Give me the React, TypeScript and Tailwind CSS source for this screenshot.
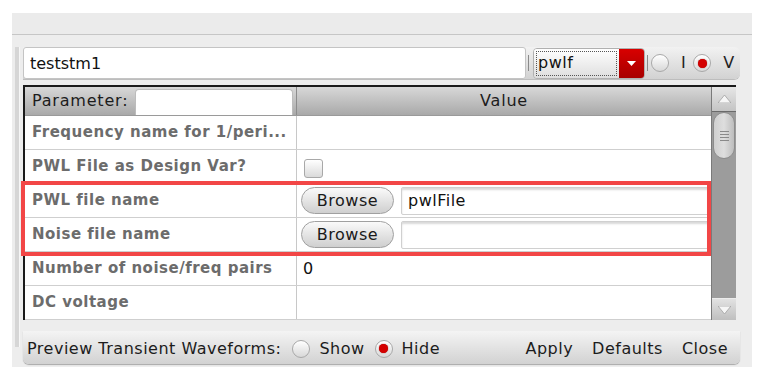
import React from 'react';

const rows = [
  { label: 'Frequency name for 1/peri...', kind: 'empty' },
  { label: 'PWL File as Design Var?', kind: 'check' },
  { label: 'PWL file name', kind: 'browse', value: 'pwlFile' },
  { label: 'Noise file name', kind: 'browse', value: '' },
  { label: 'Number of noise/freq pairs', kind: 'text', value: '0' },
  { label: 'DC voltage', kind: 'empty' },
];

const Radio: React.FC<{ on?: boolean }> = ({ on }) => (
  <div className="shrink-0 w-[18px] h-[18px] rounded-full border border-[#a8a8a8] bg-gradient-to-b from-white to-[#d8d8d8] flex items-center justify-center shadow-[inset_0_1px_1px_rgba(255,255,255,0.9)]">
    {on && <div className="w-[9px] h-[9px] rounded-full bg-[#d40000] shadow-[0_0_1px_#800]" />}
  </div>
);

const App: React.FC = () => {
  return (
    <div className="w-[765px] h-[382px] bg-white pt-[13px] pl-[12px]" style={{ fontFamily: '"DejaVu Sans", sans-serif' }}>
      <div className="w-[740px] h-[354px] bg-[#ededed] flex flex-col">
        <div className="h-[22px] border-b border-[#c6c6c6] bg-[#ebebeb] shrink-0" />

        <div className="flex pl-[3px] pr-[12px]">
          <div className="shrink-0 w-[5px] mt-[12px] h-[300px] bg-[#d6d6d6] border-r border-[#f6f6f6]" />
          <div className="flex-1 min-w-0 pl-[3px] pt-[12px] text-[16px] tracking-[0.5px]">
            {/* top row */}
            <div className="h-[32px] flex items-center rounded-r-[6px] bg-gradient-to-b from-[#f2f2f2] to-[#d2d2d2] shadow-[0_1px_0_#bdbdbd]">
              <div className="shrink-0 w-[503px] h-[32px] bg-white border border-[#c4c4c4] rounded-[3px] flex items-center pl-[6px] pt-[2px] text-[#111] tracking-[0px]">
                teststm1
              </div>
              <div className="shrink-0 w-[1px] h-[16px] bg-[#8a8a8a] ml-[2px]" />
              <div className="shrink-0 ml-[4px] w-[112px] h-[31px] flex rounded-[4px] border border-[#b0b0b0] overflow-hidden">
                <div className="flex-1 bg-gradient-to-b from-white to-[#dedede] p-[2px]">
                  <div className="h-full border border-dotted border-[#555] flex items-center pl-[1px] text-[#111]">pwlf</div>
                </div>
                <div className="w-[25px] bg-gradient-to-b from-[#d80000] to-[#a80000] flex items-center justify-center">
                  <svg width="9" height="5" viewBox="0 0 9 5"><path d="M0 0h9L4.5 5z" fill="#fff" /></svg>
                </div>
              </div>
              <div className="shrink-0 w-[1px] h-[16px] bg-[#8a8a8a] ml-[2px]" />
              <div className="ml-[3px]"><Radio /></div>
              <span className="ml-[12px] text-[#222]">I</span>
              <div className="ml-[7px]"><Radio on /></div>
              <span className="ml-[12px] text-[#222]">V</span>
            </div>

            {/* table */}
            <div className="relative mt-[6px] w-[713px] border-t-2 border-l-2 border-[#1a1a1a] flex">
              <div className="w-[686px] bg-white">
                <div className="h-[29px] flex bg-gradient-to-b from-[#d8d8d8] to-[#a9a9a9] border-b border-[#9a9a9a]">
                  <div className="w-[272px] flex items-end border-r border-[#8c8c8c]">
                    <span className="self-center pl-[7px] text-[#1c1c1c] tracking-[0.8px]">Parameter:</span>
                    <div className="ml-[7px] flex-1 mr-[3px] h-[26px] bg-white rounded-t-[4px] border border-b-0 border-[#bcbcbc]" />
                  </div>
                  <div className="flex-1 flex items-center justify-center text-[#1c1c1c] tracking-[0.8px]">Value</div>
                </div>
                {rows.map((r) => (
                  <div key={r.label} className="h-[34px] flex border-b border-[#cfcfcf]">
                    <div className="w-[272px] border-r border-[#c8c8c8] flex items-center pl-[7px] text-[15px] font-bold text-[#6c6c6c] tracking-[0.5px] whitespace-nowrap overflow-hidden">
                      {r.label}
                    </div>
                    <div className="flex-1 flex items-center pl-[4px] pr-[2px] text-[#111]">
                      {r.kind === 'check' && (
                        <div className="ml-[3px] w-[19px] h-[19px] rounded-[3px] border border-[#a8a8a8] bg-gradient-to-b from-white to-[#dadada] mt-[4px]" />
                      )}
                      {r.kind === 'text' && <span className="pl-[2px]">{r.value}</span>}
                      {r.kind === 'browse' && (
                        <>
                          <div className="w-[93px] h-[27px] rounded-full border border-[#a0a0a0] bg-gradient-to-b from-[#fafafa] to-[#cfcfcf] flex items-center justify-center text-[#1a1a1a]">
                            Browse
                          </div>
                          <div className="ml-[7px] flex-1 h-[28px] bg-white border border-[#d0d0d0] shadow-[inset_0_2px_2px_rgba(0,0,0,0.15)] rounded-[2px] flex items-center pl-[6px]">
                            {r.value}
                          </div>
                        </>
                      )}
                    </div>
                  </div>
                ))}
              </div>
              {/* scrollbar */}
              <div className="w-[25px] bg-[#9c9c9c] flex flex-col border-l border-[#7a7a7a]">
                <div className="h-[25px] bg-gradient-to-b from-[#e6e6e6] to-[#c4c4c4] border-b border-[#6a6a6a] flex items-center justify-center">
                  <svg width="13" height="8" viewBox="0 0 13 8"><path d="M6.5 0L13 8H0z" fill="#f6f6f6" stroke="#9a9a9a" strokeWidth="0.7" /></svg>
                </div>
                <div className="h-[47px] mx-[1px] rounded-full bg-gradient-to-r from-[#cfcfcf] via-[#dedede] to-[#bdbdbd] border border-[#8c8c8c] flex flex-col items-center justify-center gap-[2px]">
                  {[0, 1, 2, 3].map((i) => <div key={i} className="w-[9px] h-[1px] bg-[#8a8a8a]" />)}
                </div>
                <div className="flex-1" />
                <div className="h-[22px] bg-gradient-to-b from-[#e2e2e2] to-[#bfbfbf] border-t border-[#ececec] flex items-center justify-center">
                  <svg width="13" height="8" viewBox="0 0 13 8"><path d="M0 0h13L6.5 8z" fill="#f6f6f6" stroke="#9a9a9a" strokeWidth="0.7" /></svg>
                </div>
              </div>
              {/* highlight */}
              <div className="absolute left-[-4px] top-[94px] w-[690px] h-[75px] border-[4px] border-[#f24646] pointer-events-none" />
            </div>

            {/* footer */}
            <div className="mt-[11px] h-[33px] flex items-center rounded-b-[6px] bg-gradient-to-b from-[#f4f4f4] to-[#d2d2d2] shadow-[0_1px_1px_#a8a8a8] text-[#1c1c1c] pl-[4px] pr-[12px] pt-[2px]">
              <span>Preview Transient Waveforms:</span>
              <div className="ml-[11px]"><Radio /></div>
              <span className="ml-[9px]">Show</span>
              <div className="ml-[10px]"><Radio on /></div>
              <span className="ml-[9px]">Hide</span>
              <span className="ml-auto">Apply</span>
              <span className="ml-[19px]">Defaults</span>
              <span className="ml-[19px]">Close</span>
            </div>
          </div>
        </div>
      </div>
    </div>
  );
};

export default App;
